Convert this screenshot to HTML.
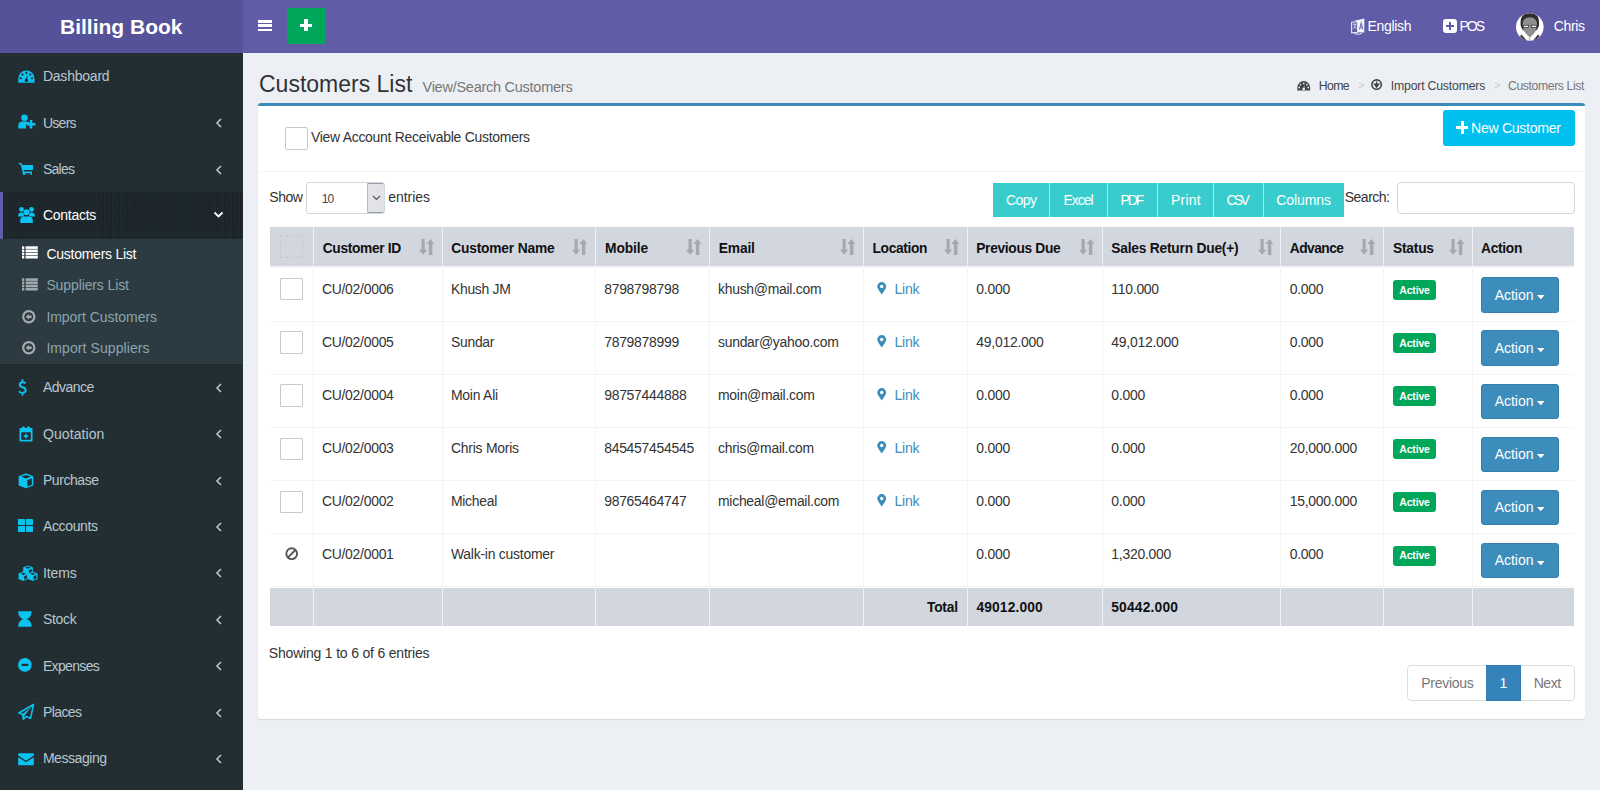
<!DOCTYPE html><html><head><meta charset="utf-8"><title>Customers List</title>
<style>
html,body{margin:0;padding:0;}
body{width:1600px;height:790px;overflow:hidden;position:relative;background:#ecf0f5;font-family:"Liberation Sans",sans-serif;}
.t{position:absolute;line-height:1;white-space:nowrap;}
.r{position:absolute;box-sizing:border-box;}
svg{position:absolute;overflow:visible;}
.side{position:absolute;left:0;top:53px;width:243px;height:737px;background-color:#222d32;
 background-image:radial-gradient(rgba(255,255,255,0.018) 0.8px, transparent 1px);background-size:4px 4px;}
</style></head><body>

<div class="r" style="left:0px;top:0px;width:243px;height:53px;background:#555299;"></div>
<div class="r" style="left:243px;top:0px;width:1357px;height:53px;background:#605ca8;"></div>
<div class="t" style="left:60px;top:16px;font-size:21px;color:#fff;font-weight:bold;">Billing Book</div>
<div class="r" style="left:258px;top:20.2px;width:13.5px;height:2.5px;background:#fff;"></div>
<div class="r" style="left:258px;top:24.4px;width:13.5px;height:2.5px;background:#fff;"></div>
<div class="r" style="left:258px;top:28.6px;width:13.5px;height:2.5px;background:#fff;"></div>
<div class="r" style="left:286.75px;top:8.4px;width:38.75px;height:35.6px;background:#00a65a;border-radius:2px;"></div>
<div class="r" style="left:300px;top:23.8px;width:12.399999999999977px;height:3.1999999999999993px;background:#fff;"></div>
<div class="r" style="left:304.4px;top:19px;width:3.5px;height:12.2px;background:#fff;"></div>
<svg style="left:1351px;top:17.5px" width="14" height="17" viewBox="0 0 14 17"><path d="M0.6 4.3 L6.6 3.6 L6.6 14.2 L0.6 14.8 Z" fill="none" stroke="#e6e6f2" stroke-width="1.1"/><path d="M2.2 1.2 Q5 2.5 8.3 1.8 L13.3 0.6 L13.3 14.6 L6.6 14.2 L6.6 3.6 Z" fill="#f4f4fa"/><path d="M8.5 11.5 L10.2 5 L11.9 11.5 M9.1 9.6 H11.3" stroke="#7874b8" stroke-width="1.1" fill="none"/><path d="M2 6.3 h3.3 M3.6 5.5 v1.2 M4.8 6.6 q-0.8 3 -2.6 4.2 M2.9 8.2 q1.2 1.8 2.8 2.6" stroke="#d8e4ec" stroke-width="0.9" fill="none"/><path d="M3.4 15.2 Q7 17.3 10.6 15.2" stroke="#e6e6f2" stroke-width="1.2" fill="none"/></svg>
<div class="t" style="left:1367.6px;top:19px;font-size:14.0px;color:#fff;letter-spacing:-0.337px;">English</div>
<div class="r" style="left:1443px;top:19px;width:14px;height:14px;background:#fff;border-radius:3px;"></div>
<div class="r" style="left:1446px;top:25px;width:8px;height:2px;background:#605ca8;"></div>
<div class="r" style="left:1449px;top:22px;width:2px;height:8px;background:#605ca8;"></div>
<div class="t" style="left:1459.4px;top:19px;font-size:14.0px;color:#fff;letter-spacing:-1.970px;">POS</div>
<svg style="left:1516.2px;top:13.2px" width="28" height="28" viewBox="0 0 28 28">
<circle cx="13.8" cy="14" r="13.8" fill="#fff"/>
<clipPath id="ac"><circle cx="13.8" cy="14" r="13.8"/></clipPath>
<g clip-path="url(#ac)">
<path d="M5.5 21.5 L11 28 L8 28 L4 23Z M22.1 21.5 L16.6 28 L19.6 28 L23.6 23Z" fill="#3a3a3a"/>
<path d="M4.6 12 Q4 2.5 9.5 0.8 Q13.8 -0.6 18.1 0.8 Q23.6 2.5 23 12 Q22 17 19 18 L8.6 18 Q5.6 17 4.6 12Z" fill="#2e2e2e"/>
<path d="M6.6 11.5 Q6.8 4.6 13.8 4.2 Q20.8 4.6 21 11.5 Q20.8 19.5 13.8 24.2 Q6.8 19.5 6.6 11.5Z" fill="#8f8f8f"/>
<rect x="7.3" y="12.2" width="5" height="2.4" fill="#f2f2f2" stroke="#1c2a30" stroke-width="0.7"/>
<rect x="15.3" y="12.2" width="5" height="2.4" fill="#f2f2f2" stroke="#1c2a30" stroke-width="0.7"/>
<path d="M13.8 24 V28" stroke="#888" stroke-width="0.7"/>
</g></svg>
<div class="t" style="left:1553.7px;top:19px;font-size:14.0px;color:#fff;letter-spacing:-0.348px;">Chris</div>
<div class="side"></div>
<div class="r" style="left:0px;top:192.2px;width:243px;height:46.400000000000006px;background-color:#202b30;background-image:radial-gradient(rgba(0,0,0,0.4) 0.6px, transparent 1px);background-size:2.7px 2.7px;"></div>
<div class="r" style="left:0px;top:192.2px;width:3px;height:46.400000000000006px;background:#605ca8;"></div>
<div class="r" style="left:0px;top:238.6px;width:243px;height:125.4px;background:#2c3b41;"></div>
<div class="t" style="left:42.9px;top:69px;font-size:14.0px;color:#b8c7ce;letter-spacing:-0.220px;">Dashboard</div>
<div class="t" style="left:42.9px;top:116px;font-size:14.0px;color:#b8c7ce;letter-spacing:-0.710px;">Users</div>
<svg style="left:215px;top:118.10000000000001px" width="8" height="10" viewBox="0 0 8 10"><path d="M6 1 L2 5 L6 9" fill="none" stroke="#b8c7ce" stroke-width="1.6"/></svg>
<div class="t" style="left:42.9px;top:162px;font-size:14.0px;color:#b8c7ce;letter-spacing:-0.725px;">Sales</div>
<svg style="left:215px;top:164.5px" width="8" height="10" viewBox="0 0 8 10"><path d="M6 1 L2 5 L6 9" fill="none" stroke="#b8c7ce" stroke-width="1.6"/></svg>
<div class="t" style="left:42.9px;top:208px;font-size:14.0px;color:#fff;letter-spacing:-0.261px;">Contacts</div>
<svg style="left:213px;top:211.2px" width="11" height="8" viewBox="0 0 11 8"><path d="M1.5 1.5 L5.5 5.5 L9.5 1.5" fill="none" stroke="#fff" stroke-width="1.8"/></svg>
<div class="t" style="left:42.9px;top:380px;font-size:14.0px;color:#b8c7ce;letter-spacing:-0.510px;">Advance</div>
<svg style="left:215px;top:382.7px" width="8" height="10" viewBox="0 0 8 10"><path d="M6 1 L2 5 L6 9" fill="none" stroke="#b8c7ce" stroke-width="1.6"/></svg>
<div class="t" style="left:42.9px;top:427px;font-size:14.0px;color:#b8c7ce;letter-spacing:0.101px;">Quotation</div>
<svg style="left:215px;top:429.09999999999997px" width="8" height="10" viewBox="0 0 8 10"><path d="M6 1 L2 5 L6 9" fill="none" stroke="#b8c7ce" stroke-width="1.6"/></svg>
<div class="t" style="left:42.9px;top:473px;font-size:14.0px;color:#b8c7ce;letter-spacing:-0.421px;">Purchase</div>
<svg style="left:215px;top:475.5px" width="8" height="10" viewBox="0 0 8 10"><path d="M6 1 L2 5 L6 9" fill="none" stroke="#b8c7ce" stroke-width="1.6"/></svg>
<div class="t" style="left:42.9px;top:519px;font-size:14.0px;color:#b8c7ce;letter-spacing:-0.344px;">Accounts</div>
<svg style="left:215px;top:521.9000000000001px" width="8" height="10" viewBox="0 0 8 10"><path d="M6 1 L2 5 L6 9" fill="none" stroke="#b8c7ce" stroke-width="1.6"/></svg>
<div class="t" style="left:42.9px;top:566px;font-size:14.0px;color:#b8c7ce;letter-spacing:-0.108px;">Items</div>
<svg style="left:215px;top:568.3000000000001px" width="8" height="10" viewBox="0 0 8 10"><path d="M6 1 L2 5 L6 9" fill="none" stroke="#b8c7ce" stroke-width="1.6"/></svg>
<div class="t" style="left:42.9px;top:612px;font-size:14.0px;color:#b8c7ce;letter-spacing:-0.318px;">Stock</div>
<svg style="left:215px;top:614.7px" width="8" height="10" viewBox="0 0 8 10"><path d="M6 1 L2 5 L6 9" fill="none" stroke="#b8c7ce" stroke-width="1.6"/></svg>
<div class="t" style="left:42.9px;top:659px;font-size:14.0px;color:#b8c7ce;letter-spacing:-0.651px;">Expenses</div>
<svg style="left:215px;top:661.1px" width="8" height="10" viewBox="0 0 8 10"><path d="M6 1 L2 5 L6 9" fill="none" stroke="#b8c7ce" stroke-width="1.6"/></svg>
<div class="t" style="left:42.9px;top:705px;font-size:14.0px;color:#b8c7ce;letter-spacing:-0.580px;">Places</div>
<svg style="left:215px;top:707.5px" width="8" height="10" viewBox="0 0 8 10"><path d="M6 1 L2 5 L6 9" fill="none" stroke="#b8c7ce" stroke-width="1.6"/></svg>
<div class="t" style="left:42.9px;top:751px;font-size:14.0px;color:#b8c7ce;letter-spacing:-0.449px;">Messaging</div>
<svg style="left:215px;top:753.9000000000001px" width="8" height="10" viewBox="0 0 8 10"><path d="M6 1 L2 5 L6 9" fill="none" stroke="#b8c7ce" stroke-width="1.6"/></svg>
<div class="t" style="left:46.4px;top:247px;font-size:14.0px;color:#fff;letter-spacing:-0.252px;">Customers List</div>
<div class="t" style="left:46.4px;top:278px;font-size:14.0px;color:#8aa4af;letter-spacing:-0.113px;">Suppliers List</div>
<div class="t" style="left:46.4px;top:310px;font-size:14.0px;color:#8aa4af;letter-spacing:-0.042px;">Import Customers</div>
<div class="t" style="left:46.4px;top:341px;font-size:14.0px;color:#8aa4af;letter-spacing:0.079px;">Import Suppliers</div>
<svg style="left:17.6px;top:69.5px" width="17" height="13" viewBox="0 0 17 13"><path d="M0.3 12.6 L0.3 8.6 A8.1 8.1 0 0 1 16.5 8.6 L16.5 12.6 Q16.5 12.8 16.2 12.8 L0.6 12.8 Q0.3 12.8 0.3 12.6Z" fill="#0bc3f0"/><g fill="#222d32"><circle cx="8.35" cy="2.9" r="1.15"/><circle cx="4.5" cy="4.6" r="1.15"/><circle cx="12.2" cy="4.6" r="1.15"/><circle cx="2.7" cy="8.3" r="1.15"/><circle cx="14" cy="8.3" r="1.15"/><circle cx="8.4" cy="10.4" r="1.7"/><path d="M7.6 10.2 L9.4 4.3 L9.2 10.4Z"/></g></svg>
<svg style="left:17.8px;top:114px" width="18" height="15" viewBox="0 0 18 15"><circle cx="6.5" cy="3.7" r="3.3" fill="#0bc3f0"/><path d="M0.3 14.5 L0.3 11.5 Q0.6 7.6 4 7.4 L9 7.4 Q10.6 7.6 11.5 8.6 L8 10 L8 14.5Z" fill="#0bc3f0"/><path d="M8.5 10.3 h9 M13 6 v8.5" stroke="#0bc3f0" stroke-width="2.6"/></svg>
<svg style="left:17.6px;top:162px" width="16" height="13" viewBox="0 0 16 13"><path d="M0.5 1.4 Q2.2 0.3 3.6 1.5 L4.2 3 L15 3 L15 8 L5.6 8 L5.9 9.5 L14 9.5 L14 12.8 L12.5 12.8 L12.5 11.3 L7.3 11.3 L7.3 12.8 L4.7 12.8 L4.5 9.5 L2.8 3.2 Q1.8 2 0.5 1.4Z" fill="#0bc3f0"/></svg>
<svg style="left:18px;top:206.5px" width="17" height="16" viewBox="0 0 17 16"><g fill="#0bc3f0"><circle cx="3.5" cy="2.4" r="2.4"/><circle cx="13.5" cy="2.4" r="2.4"/><circle cx="8.5" cy="5.3" r="3"/><path d="M0 9.5 Q0 5.4 3.5 5.4 Q5 5.4 5.6 6.6 Q5.6 8.6 6.3 9.4Z"/><path d="M17 9.5 Q17 5.4 13.5 5.4 Q12 5.4 11.4 6.6 Q11.4 8.6 10.7 9.4Z"/><path d="M2.2 15.9 L2.2 13.5 Q2.4 9.4 6 9.4 L11 9.4 Q14.6 9.4 14.8 13.5 L14.8 15.9Z"/></g></svg>
<svg style="left:22px;top:246.2px" width="16" height="13" viewBox="0 0 16 13"><rect x="0" y="0.3" width="2.3" height="2.6" fill="#fff"/><rect x="3.6" y="0.3" width="12.2" height="2.6" fill="#fff"/><rect x="0" y="3.5" width="2.3" height="2.6" fill="#fff"/><rect x="3.6" y="3.5" width="12.2" height="2.6" fill="#fff"/><rect x="0" y="6.7" width="2.3" height="2.6" fill="#fff"/><rect x="3.6" y="6.7" width="12.2" height="2.6" fill="#fff"/><rect x="0" y="9.900000000000002" width="2.3" height="2.6" fill="#fff"/><rect x="3.6" y="9.900000000000002" width="12.2" height="2.6" fill="#fff"/></svg>
<svg style="left:22px;top:277.8px" width="16" height="13" viewBox="0 0 16 13"><rect x="0" y="0.3" width="2.3" height="2.6" fill="#a0aaae"/><rect x="3.6" y="0.3" width="12.2" height="2.6" fill="#a0aaae"/><rect x="0" y="3.5" width="2.3" height="2.6" fill="#a0aaae"/><rect x="3.6" y="3.5" width="12.2" height="2.6" fill="#a0aaae"/><rect x="0" y="6.7" width="2.3" height="2.6" fill="#a0aaae"/><rect x="3.6" y="6.7" width="12.2" height="2.6" fill="#a0aaae"/><rect x="0" y="9.900000000000002" width="2.3" height="2.6" fill="#a0aaae"/><rect x="3.6" y="9.900000000000002" width="12.2" height="2.6" fill="#a0aaae"/></svg>
<svg style="left:21.8px;top:309.5px" width="14" height="14" viewBox="0 0 14 14"><circle cx="6.8" cy="6.8" r="5.6" fill="none" stroke="#a7abad" stroke-width="2.2"/><path d="M3.8 6.8 L6.8 3.8 L6.8 5.6 L9.6 5.6 L9.6 8 L6.8 8 L6.8 9.8Z" fill="#a7abad"/></svg>
<svg style="left:21.8px;top:341px" width="14" height="14" viewBox="0 0 14 14"><circle cx="6.8" cy="6.8" r="5.6" fill="none" stroke="#a7abad" stroke-width="2.2"/><path d="M3.8 6.8 L6.8 3.8 L6.8 5.6 L9.6 5.6 L9.6 8 L6.8 8 L6.8 9.8Z" fill="#a7abad"/></svg>
<svg style="left:18px;top:379px" width="10" height="17" viewBox="0 0 10 17"><path d="M7.6 4.4 Q6.5 3 4.5 3.2 Q1.8 3.5 1.8 5.8 Q1.9 7.7 4.5 8.3 Q7.7 9 7.7 11.5 Q7.5 13.8 4.5 13.9 Q2.2 13.9 1 12.3 M4.5 0.3 V3.2 M4.5 13.9 V16.4" fill="none" stroke="#0bc3f0" stroke-width="1.9"/></svg>
<svg style="left:17.5px;top:425.5px" width="16" height="16" viewBox="0 0 16 16"><path d="M1.5 3 Q1.5 2 2.5 2 L4 2 Q4.2 0.2 5.5 0.2 Q6.8 0.2 7 2 L9 2 Q9.2 0.2 10.5 0.2 Q11.8 0.2 12 2 L13.5 2 Q14.5 2 14.5 3 L14.5 14.5 Q14.5 15.5 13.5 15.5 L2.5 15.5 Q1.5 15.5 1.5 14.5Z" fill="#0bc3f0"/><rect x="3.2" y="6.3" width="9.6" height="7.5" fill="#222d32"/><path d="M8 7.8 v4.6 M5.7 10.1 h4.6" stroke="#0bc3f0" stroke-width="1.6"/></svg>
<svg style="left:17.5px;top:473px" width="16" height="16" viewBox="0 0 16 16"><path d="M8 0.3 L15.3 3.2 L15.3 12.5 L8 15.3 L0.7 12.5 L0.7 3.2Z" fill="#0bc3f0"/><path d="M3.3 3.6 L8 1.9 L12.7 3.6 L8 5.4Z" fill="#222d32"/><path d="M9.3 7.2 L13.8 5.2 L13.8 11.7 L9.3 13.5Z" fill="#222d32"/></svg>
<svg style="left:17.9px;top:519.4px" width="15" height="13" viewBox="0 0 15 13"><g fill="#0bc3f0"><rect x="0" y="0" width="7" height="6" rx="0.8"/><rect x="8" y="0" width="7" height="6" rx="0.8"/><rect x="0" y="7" width="7" height="6" rx="0.8"/><rect x="8" y="7" width="7" height="6" rx="0.8"/></g></svg>
<svg style="left:17.5px;top:564.5px" width="20" height="17" viewBox="0 0 20 17"><path d="M10 0.4 L14.8 2.3 L14.8 7.9 L10 9.8 L5.2 7.9 L5.2 2.3Z" fill="#0bc3f0"/><path d="M7.4 2.6 L10 1.6 L12.6 2.6 L10 3.6999999999999997Z" fill="#222d32"/><path d="M10.9 5.0 L13.7 3.9 L13.7 7.4 L10.9 8.5Z" fill="#222d32"/><path d="M5.3 6.6 L10.1 8.5 L10.1 14.1 L5.3 16.0 L0.5 14.1 L0.5 8.5Z" fill="#0bc3f0"/><path d="M2.6999999999999997 8.8 L5.3 7.8 L7.9 8.8 L5.3 9.899999999999999Z" fill="#222d32"/><path d="M6.2 11.2 L9.0 10.1 L9.0 13.6 L6.2 14.7Z" fill="#222d32"/><path d="M14.7 6.6 L19.5 8.5 L19.5 14.1 L14.7 16.0 L9.899999999999999 14.1 L9.899999999999999 8.5Z" fill="#0bc3f0"/><path d="M12.1 8.8 L14.7 7.8 L17.3 8.8 L14.7 9.899999999999999Z" fill="#222d32"/><path d="M15.6 11.2 L18.4 10.1 L18.4 13.6 L15.6 14.7Z" fill="#222d32"/></svg>
<svg style="left:17.7px;top:611px" width="14" height="16" viewBox="0 0 14 16"><path d="M0.3 0.3 H13.5 V1.9 Q12.8 6.6 8.6 8 Q12.8 9.4 13.5 14.1 V15.7 H0.3 V14.1 Q1 9.4 5.2 8 Q1 6.6 0.3 1.9Z" fill="#0bc3f0"/></svg>
<svg style="left:17.8px;top:658.4px" width="14" height="14" viewBox="0 0 14 14"><circle cx="6.9" cy="6.9" r="6.8" fill="#0bc3f0"/><rect x="3.5" y="5.8" width="6.8" height="2.2" fill="#222d32"/></svg>
<svg style="left:18px;top:704px" width="16" height="16" viewBox="0 0 16 16"><path d="M15.5 0.5 L0.9 9 L4.6 10.3 L5.4 15.3 L8.2 12.5 L12.6 14.2Z" fill="none" stroke="#0bc3f0" stroke-width="1.5" stroke-linejoin="round"/><path d="M4.6 10.3 L13.5 2.6 L6.6 11.6 L5.4 15.3Z" fill="#0bc3f0"/></svg>
<svg style="left:17.9px;top:752.7px" width="16" height="12.5" viewBox="0 0 16 12.5"><path d="M0.2 0.2 H15.8 V2.6 L8 7.7 L0.2 2.6Z" fill="#0bc3f0"/><path d="M0.2 4.3 L8 9.3 L15.8 4.3 V12.3 H0.2Z" fill="#0bc3f0"/></svg>
<div class="t" style="left:259px;top:73px;font-size:23px;color:#333;">Customers List</div>
<div class="t" style="left:422.5px;top:80px;font-size:14.52px;color:#777;letter-spacing:-0.265px;">View/Search Customers</div>
<svg style="left:1297px;top:80.5px" width="14" height="10" viewBox="0 0 14 10"><path d="M0.3 9.6 L0.3 6.5 A6.4 6.4 0 0 1 13.1 6.5 L13.1 9.6Z" fill="#444"/><g fill="#ecf0f5"><circle cx="6.7" cy="2.3" r="0.9"/><circle cx="3.5" cy="3.6" r="0.9"/><circle cx="9.9" cy="3.6" r="0.9"/><circle cx="2.2" cy="6.5" r="0.9"/><circle cx="11.2" cy="6.5" r="0.9"/><circle cx="6.7" cy="8" r="1.3"/><path d="M6.1 8 L7.5 3.5 L7.3 8.2Z"/></g></svg>
<div class="t" style="left:1318.7px;top:80px;font-size:12.24px;color:#444;letter-spacing:-0.560px;">Home</div>
<div class="t" style="left:1358px;top:80px;font-size:11.41px;color:#ccc;letter-spacing:-0.239px;">&gt;</div>
<svg style="left:1371.4px;top:79px" width="12" height="12" viewBox="0 0 12 12"><circle cx="5.6" cy="5.6" r="4.7" fill="none" stroke="#444" stroke-width="1.6"/><path d="M5.6 2.6 V6 M3.4 5.2 L5.6 8.2 L7.8 5.2Z" stroke="#444" stroke-width="1.3" fill="#444"/></svg>
<div class="t" style="left:1390.8px;top:80px;font-size:12.24px;color:#444;letter-spacing:-0.183px;">Import Customers</div>
<div class="t" style="left:1494px;top:80px;font-size:11.41px;color:#ccc;letter-spacing:-0.239px;">&gt;</div>
<div class="t" style="left:1508.0px;top:80px;font-size:12.24px;color:#777;letter-spacing:-0.395px;">Customers List</div>
<div class="r" style="left:258px;top:103px;width:1327px;height:616px;background:#fff;border-top:3px solid #3c8dbc;border-radius:3px;box-shadow:0 1px 1px rgba(0,0,0,0.1);"></div>
<div class="r" style="left:285px;top:126.6px;width:23px;height:23.0px;border:1px solid #c8c8c8;border-radius:2px;background:#fff;"></div>
<div class="t" style="left:310.9px;top:131px;font-size:13.95px;color:#333;letter-spacing:-0.262px;">View Account Receivable Customers</div>
<div class="r" style="left:1443px;top:110px;width:132px;height:36px;background:#00c0ef;border-radius:3px;"></div>
<div class="r" style="left:1456px;top:126px;width:12px;height:3px;background:#fff;"></div>
<div class="r" style="left:1460.5px;top:121.3px;width:3.0px;height:12.399999999999991px;background:#fff;"></div>
<div class="t" style="left:1471.0px;top:121px;font-size:14.1px;color:#fff;letter-spacing:-0.297px;">New Customer</div>
<div class="r" style="left:258px;top:171px;width:1327px;height:1px;background:#f4f4f4;"></div>
<div class="t" style="left:269.25px;top:190px;font-size:14.0px;color:#333;letter-spacing:-0.440px;">Show</div>
<div class="r" style="left:306.4px;top:182.4px;width:78.60000000000002px;height:31.599999999999994px;border:1px solid #d2d6de;border-radius:3px;background:#fff;"></div>
<div class="r" style="left:367px;top:183.4px;width:17px;height:29.599999999999994px;background:#e2e3e6;border-left:1px solid #b8bcc0;border-top:1px solid #9a9ea2;border-bottom:1px solid #9a9ea2;border-radius:0 2px 2px 0;"></div>
<svg style="left:371.5px;top:195px" width="9" height="6" viewBox="0 0 9 6"><path d="M1 1 L4.5 4.5 L8 1" fill="none" stroke="#555" stroke-width="1.2"/></svg>
<div class="t" style="left:321.75px;top:194px;font-size:11.93px;color:#444;letter-spacing:-0.992px;">10</div>
<div class="t" style="left:388.3px;top:190px;font-size:14.0px;color:#333;letter-spacing:-0.050px;">entries</div>
<div class="r" style="left:992.5px;top:183px;width:351.29999999999995px;height:33.599999999999994px;background:#39cccc;"></div>
<div class="t" style="left:981.22px;width:80px;text-align:center;top:193px;font-size:14.0px;color:#fff;letter-spacing:-0.563px;">Copy</div>
<div class="r" style="left:1049.2px;top:183px;width:1.0px;height:33.599999999999994px;background:rgba(255,255,255,0.55);"></div>
<div class="t" style="left:1038.09px;width:80px;text-align:center;top:193px;font-size:14.0px;color:#fff;letter-spacing:-0.970px;">Excel</div>
<div class="r" style="left:1106.75px;top:183px;width:1.0px;height:33.599999999999994px;background:rgba(255,255,255,0.55);"></div>
<div class="t" style="left:1091.40px;width:80px;text-align:center;top:193px;font-size:14.0px;color:#fff;letter-spacing:-2.000px;">PDF</div>
<div class="r" style="left:1157.0px;top:183px;width:1.0px;height:33.599999999999994px;background:rgba(255,255,255,0.55);"></div>
<div class="t" style="left:1145.90px;width:80px;text-align:center;top:193px;font-size:14.0px;color:#fff;letter-spacing:0.208px;">Print</div>
<div class="r" style="left:1212.9px;top:183px;width:1.0px;height:33.599999999999994px;background:rgba(255,255,255,0.55);"></div>
<div class="t" style="left:1196.74px;width:80px;text-align:center;top:193px;font-size:14.0px;color:#fff;letter-spacing:-2.760px;">CSV</div>
<div class="r" style="left:1262.9px;top:183px;width:1.0px;height:33.599999999999994px;background:rgba(255,255,255,0.55);"></div>
<div class="t" style="left:1263.59px;width:80px;text-align:center;top:193px;font-size:14.0px;color:#fff;letter-spacing:-0.080px;">Columns</div>
<div class="t" style="left:1344.7px;top:190px;font-size:14.0px;color:#333;letter-spacing:-0.488px;">Search:</div>
<div class="r" style="left:1397.4px;top:182.4px;width:177.5999999999999px;height:31.299999999999983px;border:1px solid #d2d6de;border-radius:4px;background:#fff;"></div>
<div class="r" style="left:270px;top:226.7px;width:1304px;height:39.10000000000002px;background:#d2d6de;"></div>
<div class="r" style="left:312.5px;top:226.7px;width:1.0px;height:39.10000000000002px;background:#f0f1f4;"></div>
<div class="r" style="left:441.5px;top:226.7px;width:1.0px;height:39.10000000000002px;background:#f0f1f4;"></div>
<div class="r" style="left:594.8px;top:226.7px;width:1.0px;height:39.10000000000002px;background:#f0f1f4;"></div>
<div class="r" style="left:708.6px;top:226.7px;width:1.0px;height:39.10000000000002px;background:#f0f1f4;"></div>
<div class="r" style="left:862.5px;top:226.7px;width:1.0px;height:39.10000000000002px;background:#f0f1f4;"></div>
<div class="r" style="left:966.9px;top:226.7px;width:1.0px;height:39.10000000000002px;background:#f0f1f4;"></div>
<div class="r" style="left:1101.9px;top:226.7px;width:1.0px;height:39.10000000000002px;background:#f0f1f4;"></div>
<div class="r" style="left:1280.3px;top:226.7px;width:1.0px;height:39.10000000000002px;background:#f0f1f4;"></div>
<div class="r" style="left:1383.1px;top:226.7px;width:1.0px;height:39.10000000000002px;background:#f0f1f4;"></div>
<div class="r" style="left:1471.9px;top:226.7px;width:1.0px;height:39.10000000000002px;background:#f0f1f4;"></div>
<div class="r" style="left:270px;top:265.8px;width:1304px;height:2.6999999999999886px;background:#f4f4f4;"></div>
<div class="t" style="left:322.75px;top:242px;font-size:13.79px;color:#111;font-weight:bold;letter-spacing:-0.348px;">Customer ID</div>
<svg style="left:418.7px;top:239px" width="16" height="16" viewBox="0 0 16 16"><g fill="#a3a9ae"><rect x="2.5" y="0" width="3.2" height="11.5"/><path d="M0 10.8 L8.2 10.8 L4.1 15.8Z"/><rect x="9.9" y="4.5" width="3.4" height="11.5"/><path d="M7.4 5 L15.2 5 L11.6 0Z"/></g></svg>
<div class="t" style="left:451.2px;top:242px;font-size:13.79px;color:#111;font-weight:bold;letter-spacing:-0.189px;">Customer Name</div>
<svg style="left:572.0px;top:239px" width="16" height="16" viewBox="0 0 16 16"><g fill="#a3a9ae"><rect x="2.5" y="0" width="3.2" height="11.5"/><path d="M0 10.8 L8.2 10.8 L4.1 15.8Z"/><rect x="9.9" y="4.5" width="3.4" height="11.5"/><path d="M7.4 5 L15.2 5 L11.6 0Z"/></g></svg>
<div class="t" style="left:605.0px;top:242px;font-size:13.79px;color:#111;font-weight:bold;letter-spacing:-0.079px;">Mobile</div>
<svg style="left:685.8000000000001px;top:239px" width="16" height="16" viewBox="0 0 16 16"><g fill="#a3a9ae"><rect x="2.5" y="0" width="3.2" height="11.5"/><path d="M0 10.8 L8.2 10.8 L4.1 15.8Z"/><rect x="9.9" y="4.5" width="3.4" height="11.5"/><path d="M7.4 5 L15.2 5 L11.6 0Z"/></g></svg>
<div class="t" style="left:718.75px;top:242px;font-size:13.79px;color:#111;font-weight:bold;letter-spacing:-0.142px;">Email</div>
<svg style="left:839.7px;top:239px" width="16" height="16" viewBox="0 0 16 16"><g fill="#a3a9ae"><rect x="2.5" y="0" width="3.2" height="11.5"/><path d="M0 10.8 L8.2 10.8 L4.1 15.8Z"/><rect x="9.9" y="4.5" width="3.4" height="11.5"/><path d="M7.4 5 L15.2 5 L11.6 0Z"/></g></svg>
<div class="t" style="left:872.5px;top:242px;font-size:13.79px;color:#111;font-weight:bold;letter-spacing:-0.348px;">Location</div>
<svg style="left:944.1px;top:239px" width="16" height="16" viewBox="0 0 16 16"><g fill="#a3a9ae"><rect x="2.5" y="0" width="3.2" height="11.5"/><path d="M0 10.8 L8.2 10.8 L4.1 15.8Z"/><rect x="9.9" y="4.5" width="3.4" height="11.5"/><path d="M7.4 5 L15.2 5 L11.6 0Z"/></g></svg>
<div class="t" style="left:976.25px;top:242px;font-size:13.79px;color:#111;font-weight:bold;letter-spacing:-0.329px;">Previous Due</div>
<svg style="left:1079.1000000000001px;top:239px" width="16" height="16" viewBox="0 0 16 16"><g fill="#a3a9ae"><rect x="2.5" y="0" width="3.2" height="11.5"/><path d="M0 10.8 L8.2 10.8 L4.1 15.8Z"/><rect x="9.9" y="4.5" width="3.4" height="11.5"/><path d="M7.4 5 L15.2 5 L11.6 0Z"/></g></svg>
<div class="t" style="left:1111.25px;top:242px;font-size:13.79px;color:#111;font-weight:bold;letter-spacing:-0.218px;">Sales Return Due(+)</div>
<svg style="left:1257.5px;top:239px" width="16" height="16" viewBox="0 0 16 16"><g fill="#a3a9ae"><rect x="2.5" y="0" width="3.2" height="11.5"/><path d="M0 10.8 L8.2 10.8 L4.1 15.8Z"/><rect x="9.9" y="4.5" width="3.4" height="11.5"/><path d="M7.4 5 L15.2 5 L11.6 0Z"/></g></svg>
<div class="t" style="left:1289.8px;top:242px;font-size:13.79px;color:#111;font-weight:bold;letter-spacing:-0.534px;">Advance</div>
<svg style="left:1360.3px;top:239px" width="16" height="16" viewBox="0 0 16 16"><g fill="#a3a9ae"><rect x="2.5" y="0" width="3.2" height="11.5"/><path d="M0 10.8 L8.2 10.8 L4.1 15.8Z"/><rect x="9.9" y="4.5" width="3.4" height="11.5"/><path d="M7.4 5 L15.2 5 L11.6 0Z"/></g></svg>
<div class="t" style="left:1393.0px;top:242px;font-size:13.79px;color:#111;font-weight:bold;letter-spacing:-0.226px;">Status</div>
<svg style="left:1449.1000000000001px;top:239px" width="16" height="16" viewBox="0 0 16 16"><g fill="#a3a9ae"><rect x="2.5" y="0" width="3.2" height="11.5"/><path d="M0 10.8 L8.2 10.8 L4.1 15.8Z"/><rect x="9.9" y="4.5" width="3.4" height="11.5"/><path d="M7.4 5 L15.2 5 L11.6 0Z"/></g></svg>
<div class="t" style="left:1481.0px;top:242px;font-size:13.79px;color:#111;font-weight:bold;letter-spacing:-0.297px;">Action</div>
<div class="r" style="left:280px;top:235px;width:23px;height:22.5px;border:1px dashed #c4c8cf;"></div>
<div class="r" style="left:312.5px;top:268.5px;width:1.0px;height:53.10000000000002px;background:#f4f4f4;"></div>
<div class="r" style="left:441.5px;top:268.5px;width:1.0px;height:53.10000000000002px;background:#f4f4f4;"></div>
<div class="r" style="left:594.8px;top:268.5px;width:1.0px;height:53.10000000000002px;background:#f4f4f4;"></div>
<div class="r" style="left:708.6px;top:268.5px;width:1.0px;height:53.10000000000002px;background:#f4f4f4;"></div>
<div class="r" style="left:862.5px;top:268.5px;width:1.0px;height:53.10000000000002px;background:#f4f4f4;"></div>
<div class="r" style="left:966.9px;top:268.5px;width:1.0px;height:53.10000000000002px;background:#f4f4f4;"></div>
<div class="r" style="left:1101.9px;top:268.5px;width:1.0px;height:53.10000000000002px;background:#f4f4f4;"></div>
<div class="r" style="left:1280.3px;top:268.5px;width:1.0px;height:53.10000000000002px;background:#f4f4f4;"></div>
<div class="r" style="left:1383.1px;top:268.5px;width:1.0px;height:53.10000000000002px;background:#f4f4f4;"></div>
<div class="r" style="left:1471.9px;top:268.5px;width:1.0px;height:53.10000000000002px;background:#f4f4f4;"></div>
<div class="r" style="left:270px;top:320.6px;width:1304px;height:1.0px;background:#f4f4f4;"></div>
<div class="r" style="left:280.2px;top:278.2px;width:22.400000000000034px;height:22.30000000000001px;border:1px solid #c8c8c8;border-radius:1px;background:#fff;"></div>
<div class="t" style="left:321.9px;top:283px;font-size:13.95px;color:#333;letter-spacing:-0.267px;">CU/02/0006</div>
<div class="t" style="left:450.9px;top:283px;font-size:13.95px;color:#333;letter-spacing:-0.278px;">Khush JM</div>
<div class="t" style="left:604.1999999999999px;top:283px;font-size:13.95px;color:#333;letter-spacing:-0.278px;">8798798798</div>
<div class="t" style="left:718.0px;top:283px;font-size:13.95px;color:#333;letter-spacing:-0.274px;">khush@mail.com</div>
<svg style="left:876.8px;top:281.7px" width="10" height="13" viewBox="0 0 10 13"><path d="M4.7 12.6 Q0.2 6.5 0.2 4.6 A4.5 4.5 0 0 1 9.2 4.6 Q9.2 6.5 4.7 12.6Z" fill="#3c8dbc"/><circle cx="4.7" cy="4.5" r="1.7" fill="#fff"/></svg>
<div class="t" style="left:894.4px;top:282px;font-size:14.1px;color:#3c8dbc;letter-spacing:-0.229px;">Link</div>
<div class="t" style="left:976.3px;top:283px;font-size:13.95px;color:#333;letter-spacing:-0.250px;">0.000</div>
<div class="t" style="left:1111.3000000000002px;top:283px;font-size:13.95px;color:#333;letter-spacing:-0.253px;">110.000</div>
<div class="t" style="left:1289.7px;top:283px;font-size:13.95px;color:#333;letter-spacing:-0.250px;">0.000</div>
<div class="r" style="left:1392.7px;top:280.0px;width:43.799999999999955px;height:20.0px;background:#00a65a;border-radius:3px;"></div>
<div class="t" style="left:1392.51px;width:44px;text-align:center;top:286px;font-size:10.47px;color:#fff;font-weight:bold;letter-spacing:-0.185px;">Active</div>
<div class="r" style="left:1481.2px;top:277.3px;width:77.59999999999991px;height:35.39999999999998px;background:#3c8dbc;border-radius:3px;border:1px solid #367fa9;"></div>
<div class="t" style="left:1494.7px;top:288px;font-size:14.0px;color:#fff;letter-spacing:-0.024px;">Action</div>
<svg style="left:1537.4px;top:295.0px" width="8" height="5" viewBox="0 0 8 5"><path d="M0 0 H7.6 L3.8 4.2Z" fill="#fff"/></svg>
<div class="r" style="left:312.5px;top:321.6px;width:1.0px;height:53.099999999999966px;background:#f4f4f4;"></div>
<div class="r" style="left:441.5px;top:321.6px;width:1.0px;height:53.099999999999966px;background:#f4f4f4;"></div>
<div class="r" style="left:594.8px;top:321.6px;width:1.0px;height:53.099999999999966px;background:#f4f4f4;"></div>
<div class="r" style="left:708.6px;top:321.6px;width:1.0px;height:53.099999999999966px;background:#f4f4f4;"></div>
<div class="r" style="left:862.5px;top:321.6px;width:1.0px;height:53.099999999999966px;background:#f4f4f4;"></div>
<div class="r" style="left:966.9px;top:321.6px;width:1.0px;height:53.099999999999966px;background:#f4f4f4;"></div>
<div class="r" style="left:1101.9px;top:321.6px;width:1.0px;height:53.099999999999966px;background:#f4f4f4;"></div>
<div class="r" style="left:1280.3px;top:321.6px;width:1.0px;height:53.099999999999966px;background:#f4f4f4;"></div>
<div class="r" style="left:1383.1px;top:321.6px;width:1.0px;height:53.099999999999966px;background:#f4f4f4;"></div>
<div class="r" style="left:1471.9px;top:321.6px;width:1.0px;height:53.099999999999966px;background:#f4f4f4;"></div>
<div class="r" style="left:270px;top:373.7px;width:1304px;height:1.0px;background:#f4f4f4;"></div>
<div class="r" style="left:280.2px;top:331.3px;width:22.400000000000034px;height:22.30000000000001px;border:1px solid #c8c8c8;border-radius:1px;background:#fff;"></div>
<div class="t" style="left:321.9px;top:336px;font-size:13.95px;color:#333;letter-spacing:-0.267px;">CU/02/0005</div>
<div class="t" style="left:450.9px;top:336px;font-size:13.95px;color:#333;letter-spacing:-0.269px;">Sundar</div>
<div class="t" style="left:604.1999999999999px;top:336px;font-size:13.95px;color:#333;letter-spacing:-0.278px;">7879878999</div>
<div class="t" style="left:718.0px;top:336px;font-size:13.95px;color:#333;letter-spacing:-0.280px;">sundar@yahoo.com</div>
<svg style="left:876.8px;top:334.8px" width="10" height="13" viewBox="0 0 10 13"><path d="M4.7 12.6 Q0.2 6.5 0.2 4.6 A4.5 4.5 0 0 1 9.2 4.6 Q9.2 6.5 4.7 12.6Z" fill="#3c8dbc"/><circle cx="4.7" cy="4.5" r="1.7" fill="#fff"/></svg>
<div class="t" style="left:894.4px;top:335px;font-size:14.1px;color:#3c8dbc;letter-spacing:-0.229px;">Link</div>
<div class="t" style="left:976.3px;top:336px;font-size:13.95px;color:#333;letter-spacing:-0.250px;">49,012.000</div>
<div class="t" style="left:1111.3000000000002px;top:336px;font-size:13.95px;color:#333;letter-spacing:-0.250px;">49,012.000</div>
<div class="t" style="left:1289.7px;top:336px;font-size:13.95px;color:#333;letter-spacing:-0.250px;">0.000</div>
<div class="r" style="left:1392.7px;top:333.1px;width:43.799999999999955px;height:20.0px;background:#00a65a;border-radius:3px;"></div>
<div class="t" style="left:1392.51px;width:44px;text-align:center;top:339px;font-size:10.47px;color:#fff;font-weight:bold;letter-spacing:-0.185px;">Active</div>
<div class="r" style="left:1481.2px;top:330.40000000000003px;width:77.59999999999991px;height:35.39999999999998px;background:#3c8dbc;border-radius:3px;border:1px solid #367fa9;"></div>
<div class="t" style="left:1494.7px;top:341px;font-size:14.0px;color:#fff;letter-spacing:-0.024px;">Action</div>
<svg style="left:1537.4px;top:348.1px" width="8" height="5" viewBox="0 0 8 5"><path d="M0 0 H7.6 L3.8 4.2Z" fill="#fff"/></svg>
<div class="r" style="left:312.5px;top:374.7px;width:1.0px;height:53.10000000000002px;background:#f4f4f4;"></div>
<div class="r" style="left:441.5px;top:374.7px;width:1.0px;height:53.10000000000002px;background:#f4f4f4;"></div>
<div class="r" style="left:594.8px;top:374.7px;width:1.0px;height:53.10000000000002px;background:#f4f4f4;"></div>
<div class="r" style="left:708.6px;top:374.7px;width:1.0px;height:53.10000000000002px;background:#f4f4f4;"></div>
<div class="r" style="left:862.5px;top:374.7px;width:1.0px;height:53.10000000000002px;background:#f4f4f4;"></div>
<div class="r" style="left:966.9px;top:374.7px;width:1.0px;height:53.10000000000002px;background:#f4f4f4;"></div>
<div class="r" style="left:1101.9px;top:374.7px;width:1.0px;height:53.10000000000002px;background:#f4f4f4;"></div>
<div class="r" style="left:1280.3px;top:374.7px;width:1.0px;height:53.10000000000002px;background:#f4f4f4;"></div>
<div class="r" style="left:1383.1px;top:374.7px;width:1.0px;height:53.10000000000002px;background:#f4f4f4;"></div>
<div class="r" style="left:1471.9px;top:374.7px;width:1.0px;height:53.10000000000002px;background:#f4f4f4;"></div>
<div class="r" style="left:270px;top:426.8px;width:1304px;height:1.0px;background:#f4f4f4;"></div>
<div class="r" style="left:280.2px;top:384.4px;width:22.400000000000034px;height:22.30000000000001px;border:1px solid #c8c8c8;border-radius:1px;background:#fff;"></div>
<div class="t" style="left:321.9px;top:389px;font-size:13.95px;color:#333;letter-spacing:-0.267px;">CU/02/0004</div>
<div class="t" style="left:450.9px;top:389px;font-size:13.95px;color:#333;letter-spacing:-0.219px;">Moin Ali</div>
<div class="t" style="left:604.1999999999999px;top:389px;font-size:13.95px;color:#333;letter-spacing:-0.278px;">98757444888</div>
<div class="t" style="left:718.0px;top:389px;font-size:13.95px;color:#333;letter-spacing:-0.276px;">moin@mail.com</div>
<svg style="left:876.8px;top:387.9px" width="10" height="13" viewBox="0 0 10 13"><path d="M4.7 12.6 Q0.2 6.5 0.2 4.6 A4.5 4.5 0 0 1 9.2 4.6 Q9.2 6.5 4.7 12.6Z" fill="#3c8dbc"/><circle cx="4.7" cy="4.5" r="1.7" fill="#fff"/></svg>
<div class="t" style="left:894.4px;top:388px;font-size:14.1px;color:#3c8dbc;letter-spacing:-0.229px;">Link</div>
<div class="t" style="left:976.3px;top:389px;font-size:13.95px;color:#333;letter-spacing:-0.250px;">0.000</div>
<div class="t" style="left:1111.3000000000002px;top:389px;font-size:13.95px;color:#333;letter-spacing:-0.250px;">0.000</div>
<div class="t" style="left:1289.7px;top:389px;font-size:13.95px;color:#333;letter-spacing:-0.250px;">0.000</div>
<div class="r" style="left:1392.7px;top:386.2px;width:43.799999999999955px;height:20.0px;background:#00a65a;border-radius:3px;"></div>
<div class="t" style="left:1392.51px;width:44px;text-align:center;top:392px;font-size:10.47px;color:#fff;font-weight:bold;letter-spacing:-0.185px;">Active</div>
<div class="r" style="left:1481.2px;top:383.5px;width:77.59999999999991px;height:35.39999999999998px;background:#3c8dbc;border-radius:3px;border:1px solid #367fa9;"></div>
<div class="t" style="left:1494.7px;top:394px;font-size:14.0px;color:#fff;letter-spacing:-0.024px;">Action</div>
<svg style="left:1537.4px;top:401.2px" width="8" height="5" viewBox="0 0 8 5"><path d="M0 0 H7.6 L3.8 4.2Z" fill="#fff"/></svg>
<div class="r" style="left:312.5px;top:427.8px;width:1.0px;height:53.099999999999966px;background:#f4f4f4;"></div>
<div class="r" style="left:441.5px;top:427.8px;width:1.0px;height:53.099999999999966px;background:#f4f4f4;"></div>
<div class="r" style="left:594.8px;top:427.8px;width:1.0px;height:53.099999999999966px;background:#f4f4f4;"></div>
<div class="r" style="left:708.6px;top:427.8px;width:1.0px;height:53.099999999999966px;background:#f4f4f4;"></div>
<div class="r" style="left:862.5px;top:427.8px;width:1.0px;height:53.099999999999966px;background:#f4f4f4;"></div>
<div class="r" style="left:966.9px;top:427.8px;width:1.0px;height:53.099999999999966px;background:#f4f4f4;"></div>
<div class="r" style="left:1101.9px;top:427.8px;width:1.0px;height:53.099999999999966px;background:#f4f4f4;"></div>
<div class="r" style="left:1280.3px;top:427.8px;width:1.0px;height:53.099999999999966px;background:#f4f4f4;"></div>
<div class="r" style="left:1383.1px;top:427.8px;width:1.0px;height:53.099999999999966px;background:#f4f4f4;"></div>
<div class="r" style="left:1471.9px;top:427.8px;width:1.0px;height:53.099999999999966px;background:#f4f4f4;"></div>
<div class="r" style="left:270px;top:479.9px;width:1304px;height:1.0px;background:#f4f4f4;"></div>
<div class="r" style="left:280.2px;top:437.5px;width:22.400000000000034px;height:22.30000000000001px;border:1px solid #c8c8c8;border-radius:1px;background:#fff;"></div>
<div class="t" style="left:321.9px;top:442px;font-size:13.95px;color:#333;letter-spacing:-0.267px;">CU/02/0003</div>
<div class="t" style="left:450.9px;top:442px;font-size:13.95px;color:#333;letter-spacing:-0.230px;">Chris Moris</div>
<div class="t" style="left:604.1999999999999px;top:442px;font-size:13.95px;color:#333;letter-spacing:-0.278px;">845457454545</div>
<div class="t" style="left:718.0px;top:442px;font-size:13.95px;color:#333;letter-spacing:-0.255px;">chris@mail.com</div>
<svg style="left:876.8px;top:441.0px" width="10" height="13" viewBox="0 0 10 13"><path d="M4.7 12.6 Q0.2 6.5 0.2 4.6 A4.5 4.5 0 0 1 9.2 4.6 Q9.2 6.5 4.7 12.6Z" fill="#3c8dbc"/><circle cx="4.7" cy="4.5" r="1.7" fill="#fff"/></svg>
<div class="t" style="left:894.4px;top:441px;font-size:14.1px;color:#3c8dbc;letter-spacing:-0.229px;">Link</div>
<div class="t" style="left:976.3px;top:442px;font-size:13.95px;color:#333;letter-spacing:-0.250px;">0.000</div>
<div class="t" style="left:1111.3000000000002px;top:442px;font-size:13.95px;color:#333;letter-spacing:-0.250px;">0.000</div>
<div class="t" style="left:1289.7px;top:442px;font-size:13.95px;color:#333;letter-spacing:-0.250px;">20,000.000</div>
<div class="r" style="left:1392.7px;top:439.3px;width:43.799999999999955px;height:20.0px;background:#00a65a;border-radius:3px;"></div>
<div class="t" style="left:1392.51px;width:44px;text-align:center;top:445px;font-size:10.47px;color:#fff;font-weight:bold;letter-spacing:-0.185px;">Active</div>
<div class="r" style="left:1481.2px;top:436.6px;width:77.59999999999991px;height:35.39999999999998px;background:#3c8dbc;border-radius:3px;border:1px solid #367fa9;"></div>
<div class="t" style="left:1494.7px;top:447px;font-size:14.0px;color:#fff;letter-spacing:-0.024px;">Action</div>
<svg style="left:1537.4px;top:454.3px" width="8" height="5" viewBox="0 0 8 5"><path d="M0 0 H7.6 L3.8 4.2Z" fill="#fff"/></svg>
<div class="r" style="left:312.5px;top:480.9px;width:1.0px;height:53.10000000000002px;background:#f4f4f4;"></div>
<div class="r" style="left:441.5px;top:480.9px;width:1.0px;height:53.10000000000002px;background:#f4f4f4;"></div>
<div class="r" style="left:594.8px;top:480.9px;width:1.0px;height:53.10000000000002px;background:#f4f4f4;"></div>
<div class="r" style="left:708.6px;top:480.9px;width:1.0px;height:53.10000000000002px;background:#f4f4f4;"></div>
<div class="r" style="left:862.5px;top:480.9px;width:1.0px;height:53.10000000000002px;background:#f4f4f4;"></div>
<div class="r" style="left:966.9px;top:480.9px;width:1.0px;height:53.10000000000002px;background:#f4f4f4;"></div>
<div class="r" style="left:1101.9px;top:480.9px;width:1.0px;height:53.10000000000002px;background:#f4f4f4;"></div>
<div class="r" style="left:1280.3px;top:480.9px;width:1.0px;height:53.10000000000002px;background:#f4f4f4;"></div>
<div class="r" style="left:1383.1px;top:480.9px;width:1.0px;height:53.10000000000002px;background:#f4f4f4;"></div>
<div class="r" style="left:1471.9px;top:480.9px;width:1.0px;height:53.10000000000002px;background:#f4f4f4;"></div>
<div class="r" style="left:270px;top:533.0px;width:1304px;height:1.0px;background:#f4f4f4;"></div>
<div class="r" style="left:280.2px;top:490.59999999999997px;width:22.400000000000034px;height:22.30000000000001px;border:1px solid #c8c8c8;border-radius:1px;background:#fff;"></div>
<div class="t" style="left:321.9px;top:495px;font-size:13.95px;color:#333;letter-spacing:-0.267px;">CU/02/0002</div>
<div class="t" style="left:450.9px;top:495px;font-size:13.95px;color:#333;letter-spacing:-0.246px;">Micheal</div>
<div class="t" style="left:604.1999999999999px;top:495px;font-size:13.95px;color:#333;letter-spacing:-0.278px;">98765464747</div>
<div class="t" style="left:718.0px;top:495px;font-size:13.95px;color:#333;letter-spacing:-0.265px;">micheal@email.com</div>
<svg style="left:876.8px;top:494.09999999999997px" width="10" height="13" viewBox="0 0 10 13"><path d="M4.7 12.6 Q0.2 6.5 0.2 4.6 A4.5 4.5 0 0 1 9.2 4.6 Q9.2 6.5 4.7 12.6Z" fill="#3c8dbc"/><circle cx="4.7" cy="4.5" r="1.7" fill="#fff"/></svg>
<div class="t" style="left:894.4px;top:494px;font-size:14.1px;color:#3c8dbc;letter-spacing:-0.229px;">Link</div>
<div class="t" style="left:976.3px;top:495px;font-size:13.95px;color:#333;letter-spacing:-0.250px;">0.000</div>
<div class="t" style="left:1111.3000000000002px;top:495px;font-size:13.95px;color:#333;letter-spacing:-0.250px;">0.000</div>
<div class="t" style="left:1289.7px;top:495px;font-size:13.95px;color:#333;letter-spacing:-0.250px;">15,000.000</div>
<div class="r" style="left:1392.7px;top:492.4px;width:43.799999999999955px;height:20.0px;background:#00a65a;border-radius:3px;"></div>
<div class="t" style="left:1392.51px;width:44px;text-align:center;top:498px;font-size:10.47px;color:#fff;font-weight:bold;letter-spacing:-0.185px;">Active</div>
<div class="r" style="left:1481.2px;top:489.7px;width:77.59999999999991px;height:35.400000000000034px;background:#3c8dbc;border-radius:3px;border:1px solid #367fa9;"></div>
<div class="t" style="left:1494.7px;top:500px;font-size:14.0px;color:#fff;letter-spacing:-0.024px;">Action</div>
<svg style="left:1537.4px;top:507.4px" width="8" height="5" viewBox="0 0 8 5"><path d="M0 0 H7.6 L3.8 4.2Z" fill="#fff"/></svg>
<div class="r" style="left:312.5px;top:534.0px;width:1.0px;height:53.10000000000002px;background:#f4f4f4;"></div>
<div class="r" style="left:441.5px;top:534.0px;width:1.0px;height:53.10000000000002px;background:#f4f4f4;"></div>
<div class="r" style="left:594.8px;top:534.0px;width:1.0px;height:53.10000000000002px;background:#f4f4f4;"></div>
<div class="r" style="left:708.6px;top:534.0px;width:1.0px;height:53.10000000000002px;background:#f4f4f4;"></div>
<div class="r" style="left:862.5px;top:534.0px;width:1.0px;height:53.10000000000002px;background:#f4f4f4;"></div>
<div class="r" style="left:966.9px;top:534.0px;width:1.0px;height:53.10000000000002px;background:#f4f4f4;"></div>
<div class="r" style="left:1101.9px;top:534.0px;width:1.0px;height:53.10000000000002px;background:#f4f4f4;"></div>
<div class="r" style="left:1280.3px;top:534.0px;width:1.0px;height:53.10000000000002px;background:#f4f4f4;"></div>
<div class="r" style="left:1383.1px;top:534.0px;width:1.0px;height:53.10000000000002px;background:#f4f4f4;"></div>
<div class="r" style="left:1471.9px;top:534.0px;width:1.0px;height:53.10000000000002px;background:#f4f4f4;"></div>
<div class="r" style="left:270px;top:586.1px;width:1304px;height:1.0px;background:#f4f4f4;"></div>
<svg style="left:284.5px;top:547.2px" width="14" height="14" viewBox="0 0 14 14"><circle cx="6.7" cy="6.7" r="5.4" fill="none" stroke="#555" stroke-width="1.9"/><path d="M3 10.4 L10.4 3" stroke="#555" stroke-width="1.9"/></svg>
<div class="t" style="left:321.9px;top:548px;font-size:13.95px;color:#333;letter-spacing:-0.267px;">CU/02/0001</div>
<div class="t" style="left:450.9px;top:548px;font-size:13.95px;color:#333;letter-spacing:-0.240px;">Walk-in customer</div>
<div class="t" style="left:976.3px;top:548px;font-size:13.95px;color:#333;letter-spacing:-0.250px;">0.000</div>
<div class="t" style="left:1111.3000000000002px;top:548px;font-size:13.95px;color:#333;letter-spacing:-0.247px;">1,320.000</div>
<div class="t" style="left:1289.7px;top:548px;font-size:13.95px;color:#333;letter-spacing:-0.250px;">0.000</div>
<div class="r" style="left:1392.7px;top:545.5px;width:43.799999999999955px;height:20.0px;background:#00a65a;border-radius:3px;"></div>
<div class="t" style="left:1392.51px;width:44px;text-align:center;top:551px;font-size:10.47px;color:#fff;font-weight:bold;letter-spacing:-0.185px;">Active</div>
<div class="r" style="left:1481.2px;top:542.8px;width:77.59999999999991px;height:35.40000000000009px;background:#3c8dbc;border-radius:3px;border:1px solid #367fa9;"></div>
<div class="t" style="left:1494.7px;top:553px;font-size:14.0px;color:#fff;letter-spacing:-0.024px;">Action</div>
<svg style="left:1537.4px;top:560.5px" width="8" height="5" viewBox="0 0 8 5"><path d="M0 0 H7.6 L3.8 4.2Z" fill="#fff"/></svg>
<div class="r" style="left:270px;top:587.6px;width:1304px;height:38.39999999999998px;background:#d2d6de;"></div>
<div class="r" style="left:312.5px;top:587.6px;width:1.0px;height:38.39999999999998px;background:#f0f1f4;"></div>
<div class="r" style="left:441.5px;top:587.6px;width:1.0px;height:38.39999999999998px;background:#f0f1f4;"></div>
<div class="r" style="left:594.8px;top:587.6px;width:1.0px;height:38.39999999999998px;background:#f0f1f4;"></div>
<div class="r" style="left:708.6px;top:587.6px;width:1.0px;height:38.39999999999998px;background:#f0f1f4;"></div>
<div class="r" style="left:862.5px;top:587.6px;width:1.0px;height:38.39999999999998px;background:#f0f1f4;"></div>
<div class="r" style="left:966.9px;top:587.6px;width:1.0px;height:38.39999999999998px;background:#f0f1f4;"></div>
<div class="r" style="left:1101.9px;top:587.6px;width:1.0px;height:38.39999999999998px;background:#f0f1f4;"></div>
<div class="r" style="left:1280.3px;top:587.6px;width:1.0px;height:38.39999999999998px;background:#f0f1f4;"></div>
<div class="r" style="left:1383.1px;top:587.6px;width:1.0px;height:38.39999999999998px;background:#f0f1f4;"></div>
<div class="r" style="left:1471.9px;top:587.6px;width:1.0px;height:38.39999999999998px;background:#f0f1f4;"></div>
<div class="t" style="right:642.23px;top:601px;font-size:13.79px;color:#111;font-weight:bold;letter-spacing:-0.227px;">Total</div>
<div class="t" style="left:976.4px;top:601px;font-size:13.79px;color:#111;font-weight:bold;letter-spacing:0.155px;">49012.000</div>
<div class="t" style="left:1111.2px;top:601px;font-size:13.79px;color:#111;font-weight:bold;letter-spacing:0.205px;">50442.000</div>
<div class="t" style="left:268.8px;top:646px;font-size:14.0px;color:#333;letter-spacing:-0.191px;">Showing 1 to 6 of 6 entries</div>
<div class="r" style="left:1407.25px;top:665.25px;width:167.75px;height:35.75px;border:1px solid #ddd;border-radius:4px;background:#fff;"></div>
<div class="r" style="left:1486.25px;top:665.25px;width:34.34999999999991px;height:35.75px;background:#3583bb;border:1px solid #337cb0;"></div>
<div class="t" style="left:1421.25px;top:676px;font-size:14.0px;color:#777;letter-spacing:-0.280px;">Previous</div>
<div class="t" style="left:1488.26px;width:30px;text-align:center;top:676px;font-size:14.0px;color:#fff;letter-spacing:-0.278px;">1</div>
<div class="t" style="left:1533.75px;top:676px;font-size:14.0px;color:#777;letter-spacing:-0.507px;">Next</div>
</body></html>
